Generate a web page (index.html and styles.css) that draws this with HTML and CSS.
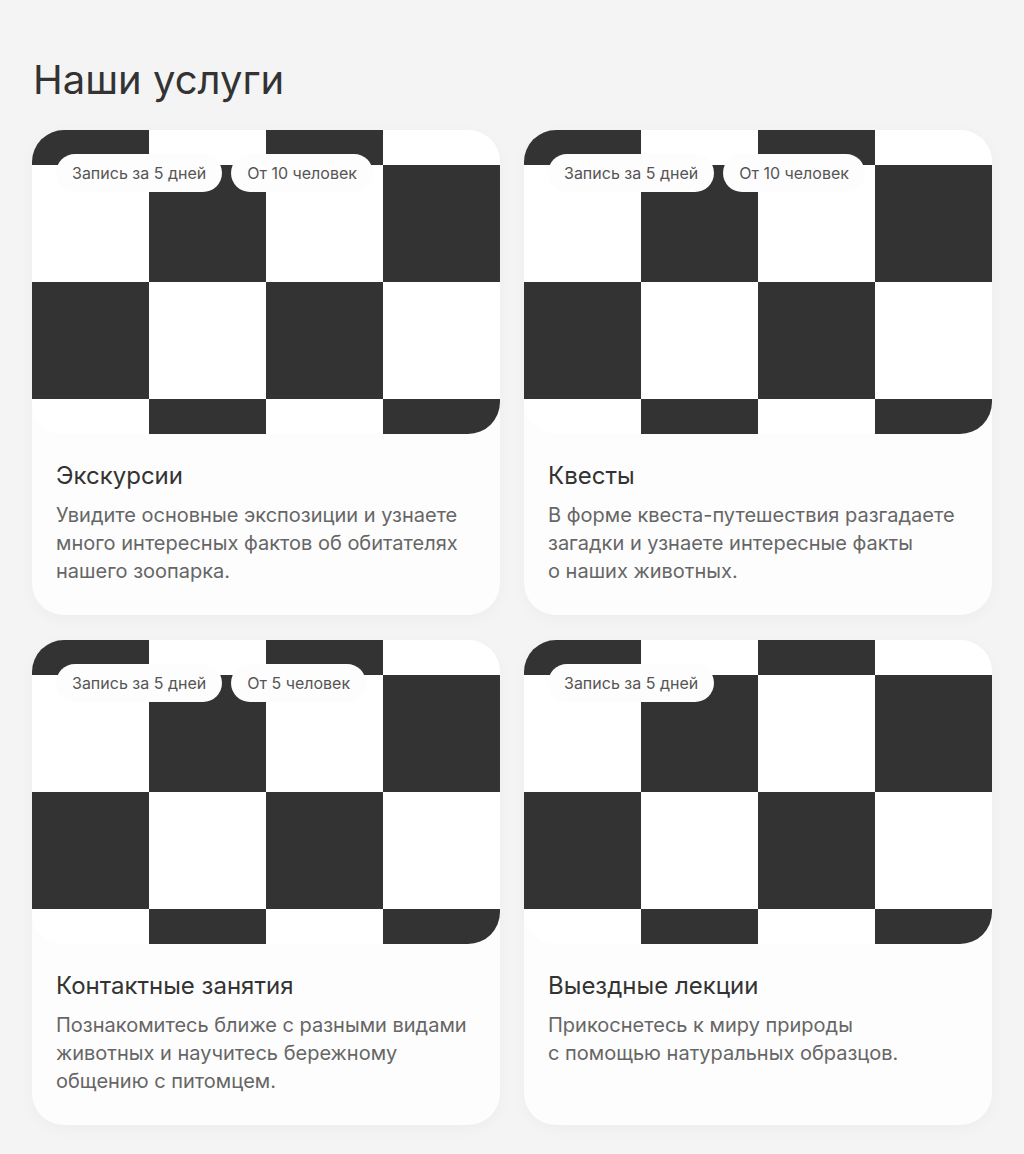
FILE: index.html
```html
<!DOCTYPE html>
<html lang="ru">

<head>
    <meta charset="UTF-8">
    <meta name="viewport" content="width=device-width, initial-scale=1.0">
    <title>Наши услуги</title>
    <link rel="stylesheet" href="styles.css">
</head>

<body>
    <section class="services">
        <h1 class="services-title">Наши услуги</h1>

        <div class="services-grid">
            <!-- Экскурсии -->
            <article class="card">
                <div class="card-image">
                    <span class="tag">Запись за 5 дней</span>
                    <span class="tag">От 10 человек</span>
                </div>
                <div class="card-body">
                    <h2 class="card-title">Экскурсии</h2>
                    <p class="card-text">Увидите основные экспозиции и&nbsp;узнаете много интересных фактов об&nbsp;обитателях нашего зоопарка.</p>
                </div>
            </article>

            <!-- Квесты -->
            <article class="card">
                <div class="card-image">
                    <span class="tag">Запись за 5 дней</span>
                    <span class="tag">От 10 человек</span>
                </div>
                <div class="card-body">
                    <h2 class="card-title">Квесты</h2>
                    <p class="card-text">В форме квеста-путешествия разгадаете загадки и&nbsp;узнаете интересные факты о&nbsp;наших животных.</p>
                </div>
            </article>

            <!-- Контактные занятия -->
            <article class="card">
                <div class="card-image">
                    <span class="tag">Запись за 5 дней</span>
                    <span class="tag">От 5 человек</span>
                </div>
                <div class="card-body">
                    <h2 class="card-title">Контактные занятия</h2>
                    <p class="card-text">Познакомитесь ближе с&nbsp;разными видами животных и&nbsp;научитесь бережному общению с&nbsp;питомцем.</p>
                </div>
            </article>

            <!-- Выездные лекции -->
            <article class="card">
                <div class="card-image">
                    <span class="tag">Запись за 5 дней</span>
                </div>
                <div class="card-body">
                    <h2 class="card-title">Выездные лекции</h2>
                    <p class="card-text">Прикоснетесь к&nbsp;миру природы с&nbsp;помощью натуральных образцов.</p>
                </div>
            </article>
        </div>
    </section>
</body>

</html>
```

FILE: styles.css
```css
/* Estilo global */
body {
    font-family: Inter, "Noto Sans", Arial, sans-serif;
    background-color: #f4f4f4;
    color: #333;
    margin: 0;
    padding: 0;
}

/* seção de serviços */
.services {
    padding: 56px 32px 29px;
}

.services-title {
    font-size: 40px;
    line-height: 48px;
    font-weight: 400;
    margin: 0 0 26px 1px;
}

.services-grid {
    display: grid;
    grid-template-columns: repeat(2, 1fr);
    gap: 25px 24px;
}

/* cartão */
.card {
    background-color: #fdfdfd;
    border-radius: 32px;
    box-shadow: 0 4px 16px rgba(0, 0, 0, 0.03);
    display: flex;
    flex-direction: column;
}

/* imagem quadriculada */
.card-image {
    height: 304px;
    box-sizing: border-box;
    padding: 24px;
    border-radius: 32px;
    display: flex;
    align-items: flex-start;
    gap: 9px;
    background-image: conic-gradient(#333 0 25%, #fff 0 50%, #333 0 75%, #fff 0);
    background-size: 234px 234px;
    background-position: 117px -82px;
}

.tag {
    background-color: #fdfdfd;
    color: #555;
    font-size: 16px;
    line-height: 38px;
    height: 38px;
    padding: 0 16px;
    border-radius: 19px;
    white-space: nowrap;
}

.card-body {
    padding: 27px 24px 30px;
}

.card-title {
    font-size: 24px;
    line-height: 30px;
    font-weight: 400;
    margin: 0 0 10px;
}

.card-text {
    font-size: 20px;
    line-height: 28px;
    color: #666;
    margin: 0;
}
```
